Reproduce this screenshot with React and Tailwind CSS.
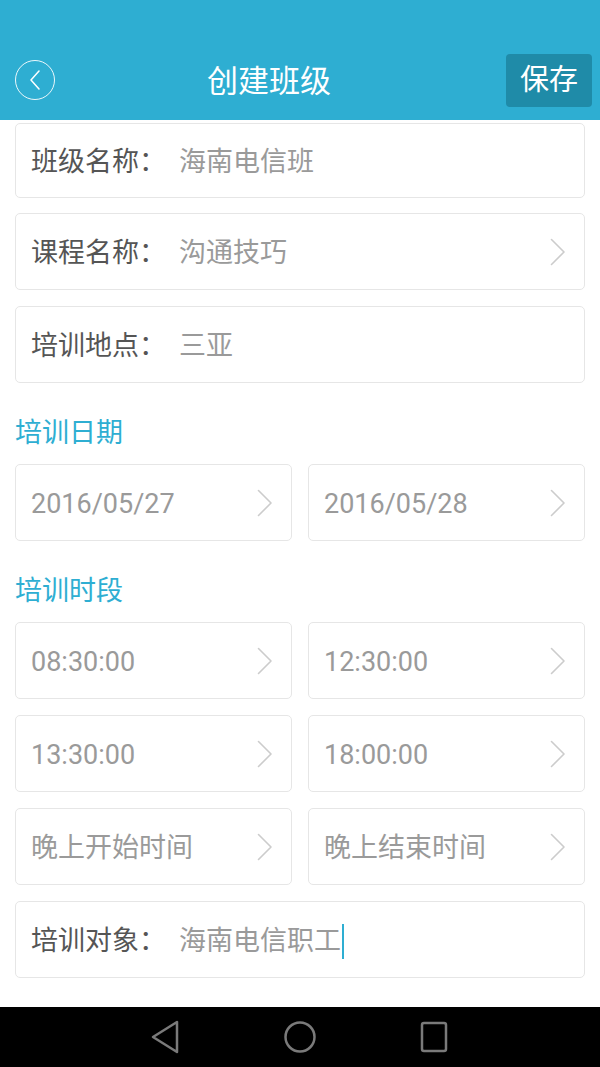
import { Fragment } from 'react';

const FONT = { fontFamily: 'Roboto, "Noto Sans CJK SC", sans-serif' };

const Chevron = () => (
  <svg width="16" height="28" viewBox="0 0 16 28" fill="none" stroke="#cccccc"
       strokeWidth="1.6" strokeLinecap="round" strokeLinejoin="round" className="shrink-0">
    <path d="M1.5 1.5 L14 14 L1.5 26.5" />
  </svg>
);

function FieldRow({ label, value, arrow, cursor, tall }) {
  return (
    <div className={`${tall ? 'h-[75px]' : 'h-[77px]'} border border-[#e6e6e6] rounded-[5px] bg-white flex items-center pl-[15px] pr-[18px]`}>
      <span className="mt-[4px] text-[27px] leading-none text-[#555555] w-[148px] shrink-0">{label}</span>
      <span className="mt-[4px] text-[27px] leading-none text-[#9a9a9a] flex-1 flex items-center">
        {value}
        {cursor && <span className="inline-block w-[2px] h-[35px] bg-[#2eaed2] ml-[1px]" />}
      </span>
      {arrow && <Chevron />}
    </div>
  );
}

function PickCell({ value }) {
  return (
    <div className="h-[77px] border border-[#e6e6e6] rounded-[5px] bg-white flex items-center justify-between pl-[15px] pr-[18px]">
      <span className="mt-[4px] text-[27px] leading-none text-[#9a9a9a]">{value}</span>
      <Chevron />
    </div>
  );
}

function SectionTitle({ children }) {
  return (
    <div className="pt-[36px] pb-[17px] text-[27px] leading-[28px] text-[#2eaed2]">{children}</div>
  );
}

const TIME_ROWS = [
  ['08:30:00', '12:30:00'],
  ['13:30:00', '18:00:00'],
  ['晚上开始时间', '晚上结束时间'],
];

export default function App() {
  return (
    <div className="w-[600px] h-[1067px] bg-white flex flex-col overflow-hidden" style={FONT}>
      {/* header */}
      <div className="h-[120px] bg-[#2eaed2] pt-[40px] shrink-0">
        <div className="h-[80px] flex items-center pl-[15px] pr-[8px]">
          <div className="w-[40px] h-[40px] shrink-0 rounded-full border-[1.5px] border-white/90 flex items-center justify-center">
            <svg width="12" height="20" viewBox="0 0 12 20" fill="none" stroke="white" strokeWidth="1.5"
                 strokeLinecap="round" strokeLinejoin="round">
              <path d="M10 1 L2 10 L10 19" />
            </svg>
          </div>
          <div className="flex-1 pr-[23px] text-center text-white text-[31px] leading-none mt-[2px]">
            创建班级
          </div>
          <div className="w-[86px] h-[53px] shrink-0 rounded-[4px] bg-[#1f8ba8] text-white text-[29px] leading-none flex items-center justify-center">
            保存
          </div>
        </div>
      </div>

      {/* form */}
      <div className="flex-1 px-[15px] pt-[3px] flex flex-col">
        <FieldRow label="班级名称：" value="海南电信班" tall />
        <div className="h-[15px]" />
        <FieldRow label="课程名称：" value="沟通技巧" arrow />
        <div className="h-[16px]" />
        <FieldRow label="培训地点：" value="三亚" />

        <SectionTitle>培训日期</SectionTitle>
        <div className="grid grid-cols-2 gap-[16px]">
          <PickCell value="2016/05/27" />
          <PickCell value="2016/05/28" />
        </div>

        <SectionTitle>培训时段</SectionTitle>
        <div className="grid grid-cols-2 gap-[16px]">
          {TIME_ROWS.map(([a, b]) => (
            <Fragment key={a}>
              <PickCell value={a} />
              <PickCell value={b} />
            </Fragment>
          ))}
        </div>
        <div className="h-[16px]" />
        <FieldRow label="培训对象：" value="海南电信职工" cursor />
      </div>

      {/* android nav bar */}
      <div className="h-[60px] bg-black shrink-0 flex items-center justify-center gap-[100px]">
        <svg width="34" height="36" viewBox="0 0 34 36" fill="none" stroke="#7a7a7a" strokeWidth="2.5" strokeLinejoin="round">
          <path d="M28 3 L28 33 L4 18 Z" />
        </svg>
        <svg width="34" height="34" viewBox="0 0 34 34" fill="none" stroke="#7a7a7a" strokeWidth="2.5">
          <circle cx="17" cy="17" r="14.5" />
        </svg>
        <svg width="34" height="34" viewBox="0 0 34 34" fill="none" stroke="#7a7a7a" strokeWidth="2.5">
          <rect x="5" y="3" width="24" height="28" rx="2" />
        </svg>
      </div>
    </div>
  );
}
